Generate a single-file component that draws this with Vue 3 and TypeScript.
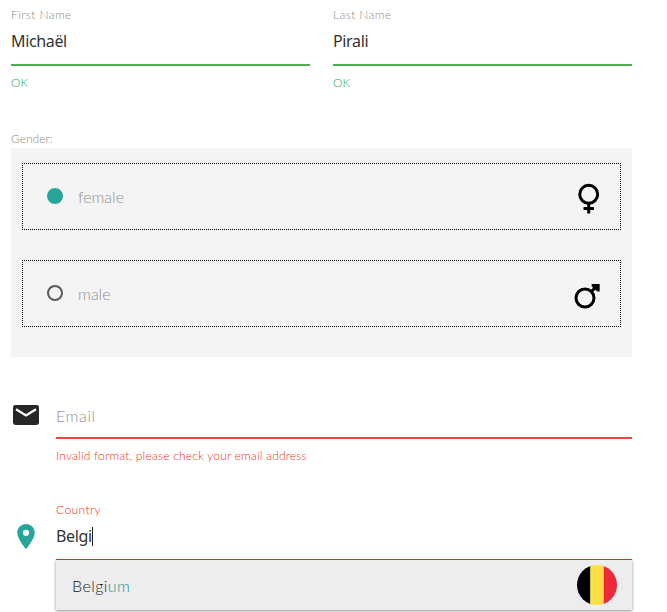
<script setup lang="ts">
import { ref } from 'vue'

interface NameField {
  id: string
  label: string
  value: string
  hint: string
}

const names: NameField[] = [
  { id: 'first', label: 'First Name', value: 'Michaël', hint: 'OK' },
  { id: 'last', label: 'Last Name', value: 'Pirali', hint: 'OK' },
]
const genders = ['female', 'male'] as const
const gender = ref<string>('female')
const typed = 'Belgi'
const rest = 'um'
</script>

<template>
  <main class="form">
    <div class="names">
      <div v-for="f in names" :key="f.id" class="field" :class="f.id">
        <div class="label">{{ f.label }}</div>
        <div class="value"><span>{{ f.value }}</span></div>
        <div class="hint">{{ f.hint }}</div>
      </div>
    </div>

    <div class="label gender-label">Gender:</div>
    <div class="panel">
      <div v-for="g in genders" :key="g" class="option" @click="gender = g">
        <span class="radio" :class="{ on: gender === g }"></span>
        <span class="option-text" :class="g">{{ g }}</span>
        <svg v-if="g === 'female'" class="sex" viewBox="0 0 32 32" fill="none" stroke="#000" stroke-width="3">
          <circle cx="15.7" cy="11.3" r="9" />
          <path d="M15.7 20v10.6M10.5 25.4h10.4" />
        </svg>
        <svg v-else class="sex" viewBox="0 0 32 32" fill="none" stroke="#000" stroke-width="3">
          <circle cx="12" cy="18" r="9" />
          <path d="M18.2 11.8l5.4-5.4" />
          <path d="M18.7 4h8v7.6h-2.4l-5.6-5.2z" fill="#000" stroke="none" />
        </svg>
      </div>
    </div>

    <div class="row email">
      <svg class="mail" viewBox="0 0 26 20">
        <rect width="26" height="20" rx="2.4" fill="#262626" />
        <path d="M3 4.2l10 6.2 10-6.2" fill="none" stroke="#fff" stroke-width="2.3" />
      </svg>
      <div class="control">
        <div class="placeholder"><span>Email</span></div>
        <div class="error">Invalid format, please check your email address</div>
      </div>
    </div>

    <div class="row country">
      <svg class="pin" viewBox="5 2 14 20">
        <path fill="#26a69a" fill-rule="evenodd" d="M12 2C8.13 2 5 5.13 5 9c0 5.25 7 13 7 13s7-7.75 7-13c0-3.87-3.13-7-7-7zm0 9.5a2.5 2.5 0 1 1 0-5 2.5 2.5 0 0 1 0 5z" />
      </svg>
      <div class="control">
        <div class="label country-label">Country</div>
        <div class="value country-value"><span>{{ typed }}</span><i class="caret"></i></div>
        <div class="suggestion">
          <span class="match">{{ typed }}<b>{{ rest }}</b></span>
          <svg class="flag" viewBox="0 0 40 40">
            <clipPath id="disc"><circle cx="20" cy="20" r="20" /></clipPath>
            <g clip-path="url(#disc)">
              <path fill="#000" d="M0 0h13.5v40H0z" />
              <path fill="#fae042" d="M13.3 0h13.4v40H13.3z" />
              <path fill="#ed2939" d="M26.7 0H40v40H26.7z" />
            </g>
          </svg>
        </div>
      </div>
    </div>
  </main>
</template>

<style>
body {
  background: #fff;
  overflow: hidden;
}
</style>

<style scoped>
.form {
  box-sizing: border-box;
  height: 612px;
  padding: 7px 35px 0 11px;
  overflow: hidden;
  font-family: Lato, "Noto Sans", sans-serif;
  font-weight: 300;
  white-space: nowrap;
}
.names {
  display: grid;
  grid-template-columns: 299px 299px;
  gap: 23px;
}
.label {
  height: 16px;
  font-size: 12px;
  line-height: 16px;
  letter-spacing: 0.4px;
  color: #8c8c8c;
}
.value {
  box-sizing: border-box;
  height: 43px;
  padding-top: 6px;
  border-bottom: 2px solid #4caf50;
  font: 400 16px/24px "Noto Sans", sans-serif;
  letter-spacing: -0.35px;
  color: #333;
}
.hint {
  height: 34px;
  line-height: 34px;
  font-size: 12px;
  letter-spacing: 0.1px;
  color: #35a94a;
}
.gender-label {
  margin-top: 31px;
  letter-spacing: 0;
}
.panel {
  display: flex;
  flex-direction: column;
  gap: 30px;
  box-sizing: border-box;
  height: 209px;
  margin-top: 1px;
  padding: 15px 11px 30px;
  background: #f4f4f4;
}
.option {
  display: flex;
  align-items: center;
  box-sizing: border-box;
  height: 67px;
  padding: 0 15px 0 24px;
  border: 1px dotted #000;
}
.radio {
  box-sizing: border-box;
  width: 16px;
  height: 16px;
  margin-bottom: 1px;
  border: 2px solid #5a5a5a;
  border-radius: 50%;
}
.radio.on {
  border-color: #26a69a;
  background: #26a69a;
}
.option-text {
  flex: 1;
  margin: 1px 0 0 15px;
  font-size: 16px;
  line-height: 20px;
  color: #909090;
}
.sex {
  width: 32px;
  height: 32px;
  margin-top: 4px;
}
.row {
  display: flex;
}
.control {
  flex: 1;
}
.email {
  height: 65px;
  margin-top: 46px;
}
.mail {
  width: 26px;
  height: 20px;
  margin: 2px 17px 0 2px;
}
.placeholder {
  box-sizing: border-box;
  height: 36px;
  border-bottom: 2px solid #f44336;
  font-size: 16px;
  line-height: 25px;
  letter-spacing: 0.6px;
  color: #909090;
}
.error {
  height: 34px;
  line-height: 34px;
  font-size: 12px;
  letter-spacing: 0.2px;
  color: #f22f22;
}
.country {
  margin-top: 34px;
}
.pin {
  width: 18px;
  height: 25px;
  margin: 22px 21px 0 6px;
}
.country-label {
  color: #f22f22;
}
.country-value {
  display: flex;
  height: 42px;
  border-bottom: 1px solid #e53935;
}
.caret {
  width: 1px;
  height: 19px;
  margin: 3px 0 0;
  background: #222;
}
.suggestion {
  display: flex;
  align-items: center;
  justify-content: space-between;
  box-sizing: border-box;
  height: 50px;
  padding: 0 15px 0 16px;
  background: #ededed;
  box-shadow: 0 1px 3px rgba(0, 0, 0, 0.45);
}
.match {
  margin-top: 1px;
  font-size: 16px;
  letter-spacing: 0.45px;
  color: #222;
}
.match b {
  font-weight: 300;
  color: #109c8f;
}
.flag {
  width: 40px;
  height: 40px;
}
</style>
